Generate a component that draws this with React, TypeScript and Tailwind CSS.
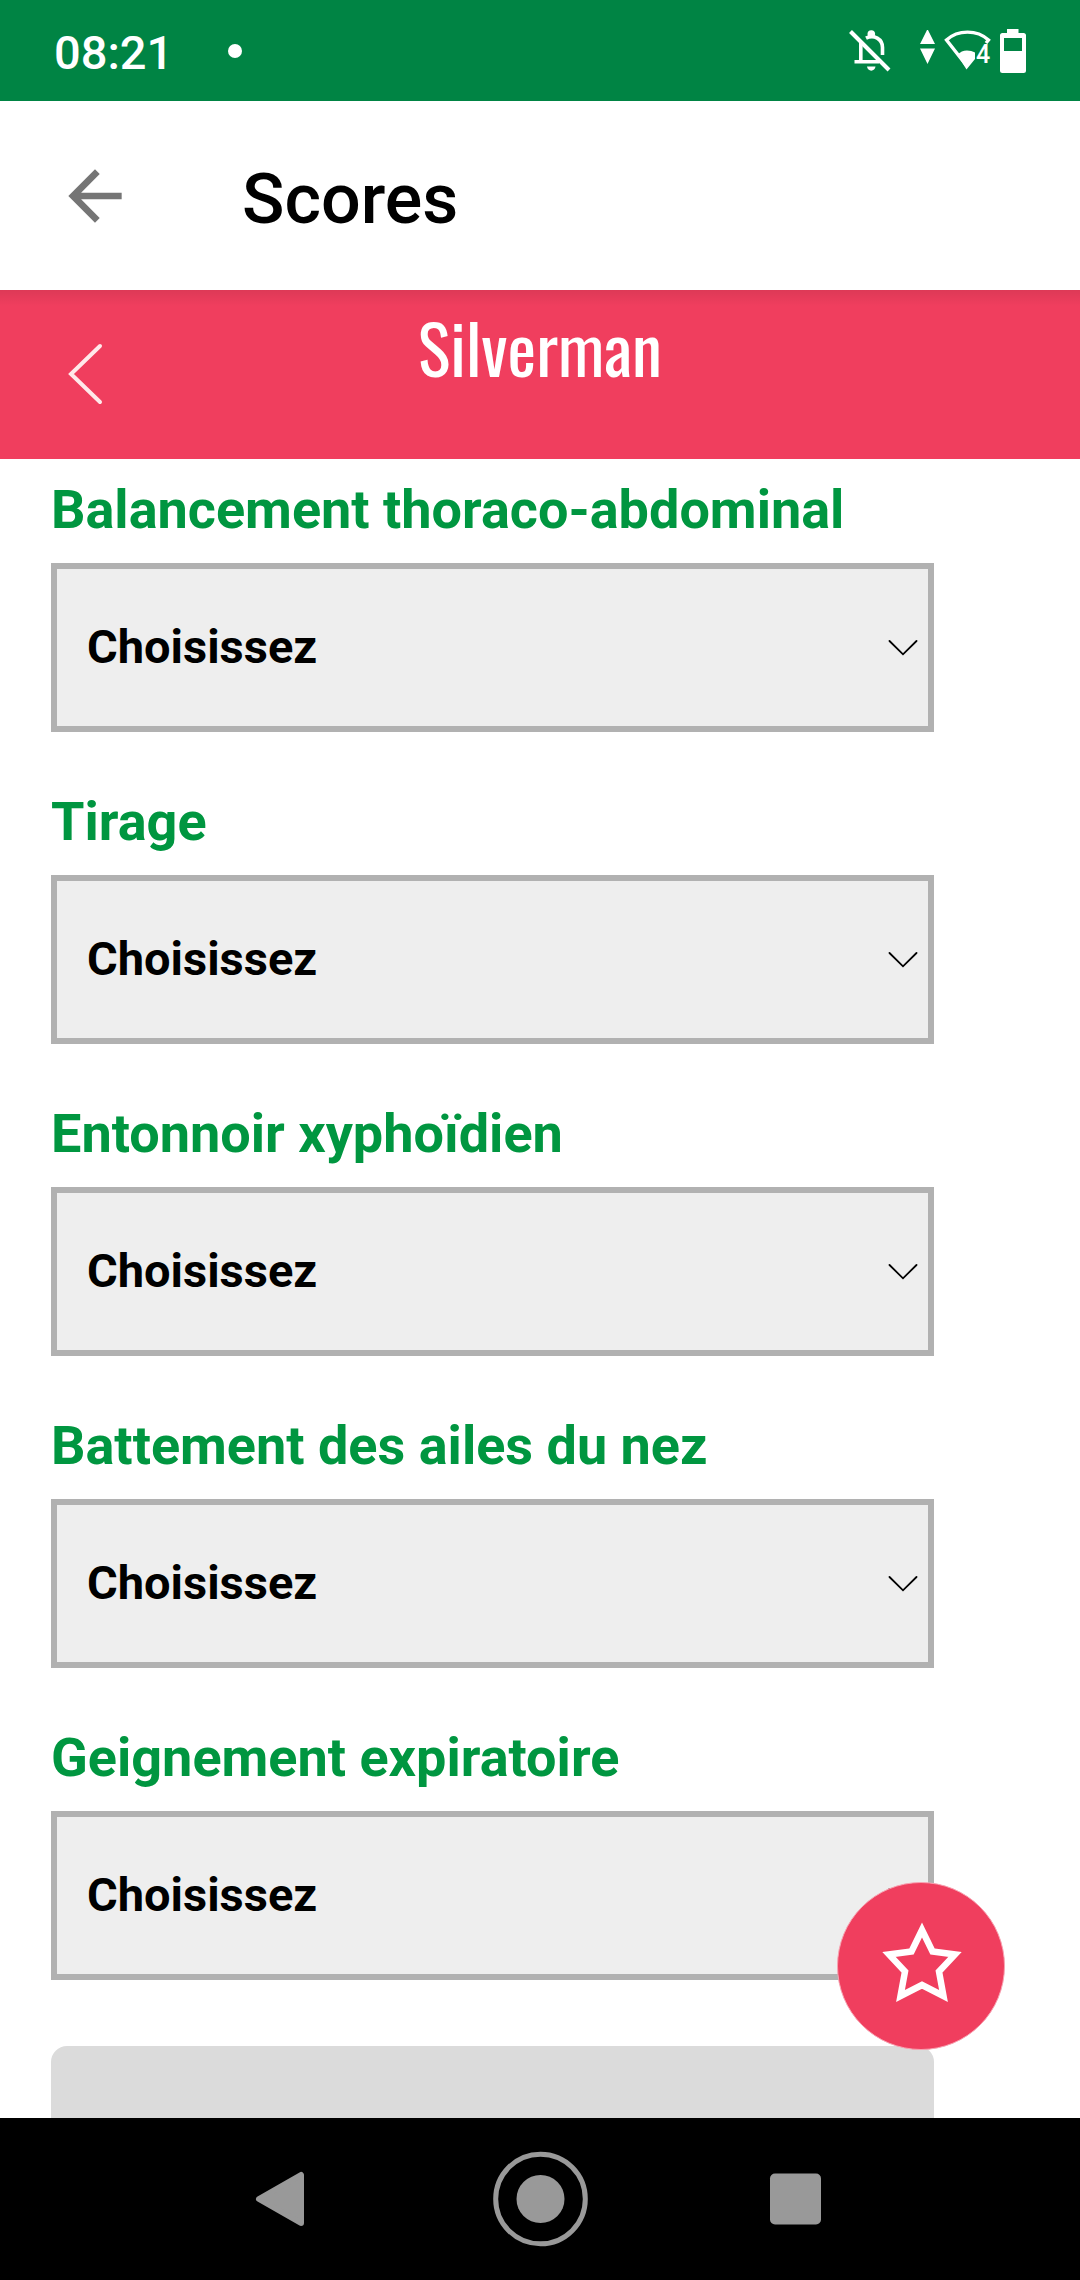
import { useState } from "react";

const CRITERIA = [
  { id: "balancement", label: "Balancement thoraco-abdominal" },
  { id: "tirage", label: "Tirage" },
  { id: "entonnoir", label: "Entonnoir xyphoïdien" },
  { id: "battement", label: "Battement des ailes du nez" },
  { id: "geignement", label: "Geignement expiratoire" },
];

function StatusBar() {
  return (
    <div className="flex h-[101px] shrink-0 items-center bg-[#008444] pl-[54px] pr-[54px] text-white">
      <span className="pt-1 text-[47px] font-medium leading-[56px]">08:21</span>
      <span className="ml-[55px] size-[14px] rounded-full bg-white" />

      <div className="ml-auto flex items-center">
        {/* Notifications off */}
        <svg className="size-[42px]" viewBox="0 0 42 42" fill="none" stroke="#fff" strokeWidth="3.6">
          <path d="M1.5 1.5 40 40" strokeWidth="4" />
          <path d="M11.8 12V31.7M5.5 31.8H30" />
          <path d="M17 8.2C25 4 33.5 9 33.5 17.5V25" />
          <circle cx="22.3" cy="4" r="3.8" fill="#fff" stroke="none" />
          <path d="M18 36.5H26.5C26 42 18.5 42 18 36.5Z" fill="#fff" stroke="none" />
        </svg>

        {/* Data activity */}
        <svg className="ml-[29px] h-[42px] w-[15px]" viewBox="0 0 15 42" fill="#fff">
          <path d="M7.5-1 15 14H0ZM0 18.5H15L7.5 34Z" />
        </svg>

        {/* Wi-Fi */}
        <svg className="ml-[9px] h-[42px] w-[47px]" viewBox="0 0 47 42">
          <path d="M22.5 35.5 2.5 10C14-.5 33-.5 44.5 10L42 13" fill="none" stroke="#fff" strokeWidth="3.4" />
          <path d="M13.5 25C18 19 26 20 31 22.5V29L22.5 39.5Z" fill="#fff" />
          <text x="32" y="33" fill="#fff" fontSize="25" fontWeight="500" fontFamily="Roboto, sans-serif">
            4
          </text>
        </svg>

        {/* Battery */}
        <svg className="ml-[9px] h-[44px] w-[26px]" viewBox="0 0 26 44" fill="#fff">
          <path
            fillRule="evenodd"
            d="M7 0H18.5V4H23.5A2.5 2.5 0 0 1 26 6.5V41.5A2.5 2.5 0 0 1 23.5 44H2.5A2.5 2.5 0 0 1 0 41.5V6.5A2.5 2.5 0 0 1 2.5 4H7ZM4 9V22H22V9Z"
          />
        </svg>
      </div>
    </div>
  );
}

function CriterionField({ id, label }: { id: string; label: string }) {
  const [value, setValue] = useState("");

  return (
    <div>
      <label htmlFor={id} className="mb-[21px] block text-[54px] font-bold leading-[64px] text-[#009640]">
        {label}
      </label>
      <div className="relative">
        <select
          id={id}
          value={value}
          onChange={(e) => setValue(e.target.value)}
          className="block h-[169px] w-full appearance-none border-6 border-[#b1b1b1] bg-[#eeeeee] pl-[30px] text-[47px] font-bold text-black"
        >
          <option value="">Choisissez</option>
        </select>
        <svg
          className="pointer-events-none absolute right-4 top-[77px] h-4 w-[30px]"
          viewBox="0 0 30 16"
          fill="none"
          stroke="#000"
          strokeWidth="1.8"
          strokeLinecap="round"
        >
          <path d="M1.5 1 15 14.3 28.5 1" />
        </svg>
      </div>
    </div>
  );
}

export default function App() {
  return (
    <div className="flex h-screen w-full flex-col bg-white font-['Roboto',sans-serif]">
      <StatusBar />

      {/* App bar */}
      <header className="flex h-[189px] shrink-0 items-center pl-[55px]">
        <button aria-label="Retour">
          <svg className="size-20" viewBox="0 0 24 24" fill="#757575">
            <path d="M20 11H7.83l5.59-5.59L12 4l-8 8 8 8 1.41-1.41L7.83 13H20v-2z" />
          </svg>
        </button>
        <h1 className="ml-[107px] pt-1.5 text-[70px] font-medium leading-[80px] text-black">Scores</h1>
      </header>

      {/* Score title */}
      <div className="relative h-[169px] shrink-0 bg-[#f03e5e] pt-3">
        <div className="absolute inset-x-0 top-0 h-4 bg-linear-to-b from-black/8 to-transparent" />
        <button aria-label="Précédent" className="absolute left-[66px] top-[51px]">
          <svg className="h-16 w-[38px]" viewBox="0 0 38 64" fill="none" stroke="#ffe9ea" strokeWidth="4">
            <path d="M34 5 5 33 34 61" strokeLinecap="round" />
          </svg>
        </button>
        <h2 className="text-center font-['Oswald','Roboto',sans-serif] text-[68px] leading-[90px] text-white">
          Silverman
        </h2>
      </div>

      {/* Form */}
      <div className="relative min-h-0 flex-1">
        <main className="h-full overflow-hidden pl-[51px] pr-[146px] pt-[19px]">
          <div className="flex flex-col gap-[58px]">
            {CRITERIA.map((c) => (
              <CriterionField key={c.id} id={c.id} label={c.label} />
            ))}
          </div>
          <button aria-label="Résultat" className="mt-[66px] block h-[169px] w-full rounded-2xl bg-[#dbdbdb]" />
        </main>

        {/* Favourite */}
        <button
          aria-label="Ajouter aux favoris"
          className="absolute bottom-17 right-[75px] flex size-[168px] items-center justify-center rounded-full border border-[#f8a3b2] bg-[#f03e5e]"
        >
          <svg className="size-20 overflow-visible" viewBox="0 0 80 80" fill="none" stroke="#fff" strokeWidth="6.5">
            <path d="M41 4 51.5 25.5 74 28.5 58 45.5 62.5 70 41 59 19.5 70 24 45.5 8 28.5 30.5 25.5Z" />
          </svg>
        </button>
      </div>

      {/* System navigation */}
      <nav className="flex h-[162px] shrink-0 items-center justify-center gap-[162px] bg-black">
        <button aria-label="Page précédente">
          <svg className="size-24" viewBox="0 0 96 96" fill="#999" stroke="#999" strokeWidth="6" strokeLinejoin="round">
            <path d="M25 48 67 24V72Z" />
          </svg>
        </button>
        <button aria-label="Accueil">
          <svg className="size-24" viewBox="0 0 96 96" fill="#999">
            <circle cx="48.5" cy="48" r="44.8" fill="none" stroke="#999" strokeWidth="5" />
            <circle cx="48.5" cy="48" r="24" />
          </svg>
        </button>
        <button aria-label="Applications récentes">
          <svg className="size-24" viewBox="0 0 96 96" fill="#999">
            <rect x="20" y="22.5" width="51" height="51" rx="5" />
          </svg>
        </button>
      </nav>
    </div>
  );
}
